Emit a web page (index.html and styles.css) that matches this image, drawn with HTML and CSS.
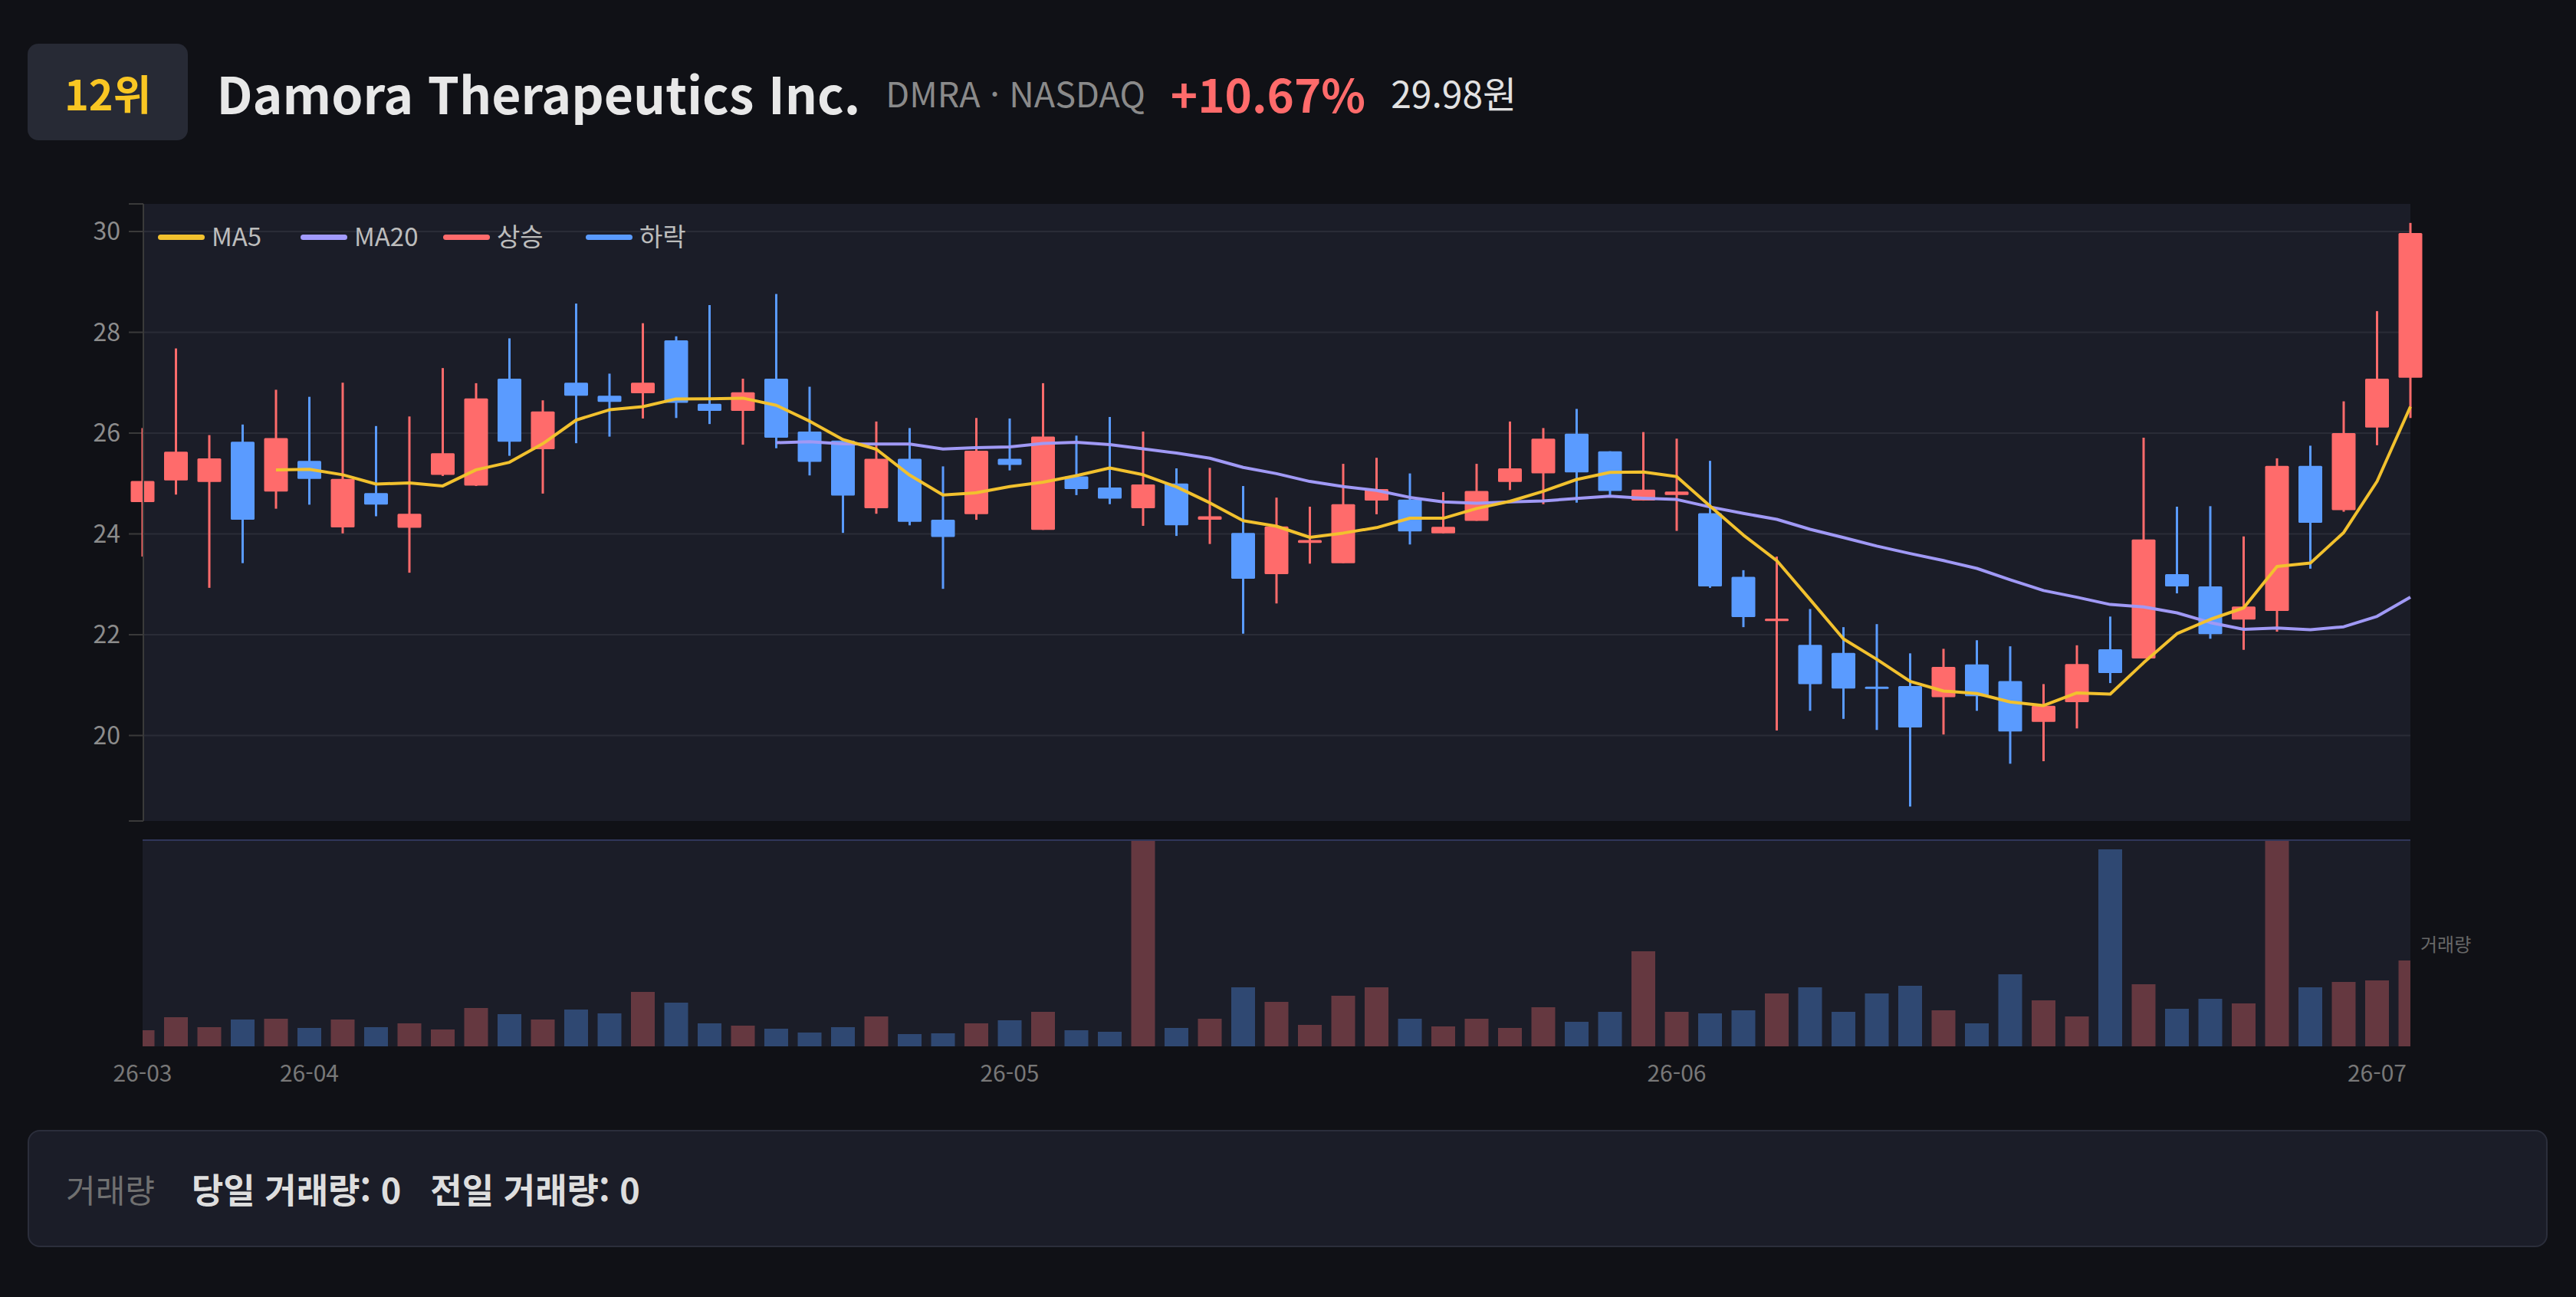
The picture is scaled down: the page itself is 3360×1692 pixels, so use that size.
FILE: index.html
```html
<!DOCTYPE html>
<html lang="ko">
<head>
<meta charset="utf-8">
<title>Damora Therapeutics Inc. 차트</title>
<link rel="stylesheet" href="styles.css">
</head>
<body>
<div class="app">
  <header class="header">
    <div class="rank">12위</div>
    <h1 class="name">Damora Therapeutics Inc.</h1>
    <span class="ticker">DMRA · NASDAQ</span>
    <span class="change">+10.67%</span>
    <span class="price">29.98원</span>
  </header>
  <section class="chart-wrap">
    <svg id="chart" class="chart" width="3287" height="1180" viewBox="0 0 3287 1180"></svg>
  </section>
  <section class="volume-box">
    <span class="vol-label">거래량</span>
    <span class="vol-value">당일 거래량: 0</span>
    <span class="vol-value">전일 거래량: 0</span>
  </section>
</div>
<script src="script.js"></script>
</body>
</html>
```

FILE: styles.css
```css
* { box-sizing: border-box; }
html, body { margin: 0; background: #101116; }
body {
  font-family: "Noto Sans CJK KR", "Noto Sans", sans-serif;
  color: #e6e6e6;
  width: 3360px;
  height: 1692px;
  overflow: hidden;
}
.app { padding: 57px 37px 0 36px; }
.header { display: flex; align-items: center; gap: 33px; height: 126px; }
.rank {
  height: 126px;
  padding: 0 48px;
  display: flex;
  align-items: center;
  background: #272a35;
  border-radius: 14px;
  color: #f9c623;
  font-size: 54px;
  font-weight: 700;
}
.name { margin: 0 0 0 4px; font-size: 66px; font-weight: 700; color: #e8e8e8; }
.ticker { font-size: 45px; color: #8a8a8a; }
.change { font-size: 60px; font-weight: 700; color: #ff6b6b; }
.price { font-size: 48px; color: #e2e2e2; }
.chart-wrap { margin-top: 67px; height: 1180px; }
.chart { display: block; }
.chart text { font-family: "Noto Sans CJK KR", "Noto Sans", sans-serif; }
.chart .plot-bg { fill: #1b1d28; }
.chart .grid { stroke: #2a2c37; stroke-width: 2; }
.chart .axis { stroke: #3a3a3a; stroke-width: 2; }
.chart .ylab { font-size: 32px; fill: #8c8c8c; }
.chart .xlab { font-size: 30px; fill: #787878; }
.chart .vlab { font-size: 24px; fill: #686868; }
.chart .leg { font-size: 33px; fill: #bdbdbd; }
.chart .up { fill: #ff6b6b; }
.chart .down { fill: #5a9bff; }
.chart .wick-up { stroke: #ff6b6b; stroke-width: 3; }
.chart .wick-down { stroke: #5a9bff; stroke-width: 3; }
.chart .vol-up { fill: #653840; }
.chart .vol-down { fill: #2f4872; }
.chart .vol-border { stroke: #30365a; stroke-width: 2; }
.chart .ma5 { fill: none; stroke: #f2c12e; stroke-width: 4; stroke-linejoin: round; }
.chart .ma20 { fill: none; stroke: #a099f5; stroke-width: 4; stroke-linejoin: round; }
.chart .sw-ma5 { fill: #f2c12e; }
.chart .sw-ma20 { fill: #a29bfe; }
.chart .sw-up { fill: #ff6b6b; }
.chart .sw-down { fill: #5a9bff; }
.volume-box {
  margin-top: 44px;
  height: 153px;
  border: 2px solid #2b2e3b;
  border-radius: 16px;
  background: #1b1d28;
  display: flex;
  align-items: center;
  gap: 38px;
  padding-left: 48px;
}
.vol-label { font-size: 42px; color: #707070; margin-right: 10px; }
.vol-value { font-size: 45px; font-weight: 700; color: #dedede; }
```

FILE: script.js
```js
(function () {
  var NS = 'http://www.w3.org/2000/svg';
  var svg = document.getElementById('chart');
  function el(tag, attrs, parent) {
    var e = document.createElementNS(NS, tag);
    for (var k in attrs) e.setAttribute(k, attrs[k]);
    (parent || svg).appendChild(e);
    return e;
  }
  // O, H, L, C, V
  var d = [
    [24.63,26.10,23.55,25.05,21],[25.06,27.68,24.78,25.63,38],[25.03,25.96,22.93,25.50,25],
    [25.83,26.17,23.42,24.28,35],[24.84,26.86,24.50,25.90,36],[25.45,26.72,24.58,25.09,24],
    [24.13,27.00,24.01,25.09,35],[24.81,26.14,24.35,24.58,25],[24.12,26.33,23.23,24.40,30],
    [25.17,27.29,25.15,25.60,22],[24.96,26.99,24.95,26.69,50],[27.08,27.88,25.55,25.83,42],
    [25.68,26.65,24.80,26.43,35],[27.00,28.57,25.80,26.74,48],[26.74,27.18,25.93,26.62,43],
    [26.79,28.18,26.29,27.00,71],[27.84,27.92,26.30,26.60,57],[26.58,28.54,26.18,26.44,30],
    [26.44,27.08,25.77,26.81,27],[27.08,28.76,25.70,25.91,23],[26.03,26.92,25.16,25.43,18],
    [25.85,25.85,24.02,24.76,25],[24.51,26.23,24.40,25.49,39],[25.49,26.10,24.17,24.24,16],
    [24.28,25.34,22.91,23.94,17],[24.39,26.30,24.28,25.65,30],[25.49,26.29,25.26,25.37,34],
    [24.08,26.99,24.08,25.93,45],[25.14,25.95,24.77,24.89,21],[24.92,26.32,24.59,24.70,19],
    [24.51,26.03,24.16,24.98,270],[25.00,25.30,23.96,24.17,24],[24.28,25.31,23.80,24.35,36],
    [24.02,24.95,22.02,23.11,77],[23.20,24.72,22.62,24.15,58],[23.82,24.54,23.41,23.88,28],
    [23.42,25.39,23.42,24.59,66],[24.66,25.51,24.39,24.89,77],[24.68,25.20,23.79,24.05,36],
    [24.01,24.83,24.01,24.14,26],[24.26,25.39,24.26,24.85,36],[25.03,26.23,24.87,25.30,24],
    [25.20,26.10,24.59,25.89,51],[25.99,26.48,24.62,25.22,32],[25.64,25.64,24.75,24.85,45],
    [24.66,26.02,24.66,24.88,124],[24.77,25.89,24.06,24.84,45],[24.41,25.45,22.93,22.96,43],
    [23.15,23.28,22.15,22.35,47],[22.27,23.55,20.10,22.32,69],[21.80,22.51,20.49,21.02,77],
    [21.64,22.15,20.33,20.93,45],[20.97,22.21,20.11,20.94,69],[20.98,21.63,18.59,20.16,79],
    [20.76,21.72,20.02,21.36,47],[21.41,21.89,20.49,20.78,30],[21.08,21.77,19.44,20.08,94],
    [20.27,21.02,19.49,20.59,60],[20.66,21.79,20.14,21.42,39],[21.71,22.36,21.04,21.24,257],
    [21.53,25.91,21.53,23.89,81],[23.20,24.54,22.82,22.96,49],[22.96,24.55,21.92,22.01,62],
    [22.30,23.95,21.70,22.56,56],[22.47,25.50,22.06,25.35,270],[25.35,25.75,23.31,24.22,77],
    [24.47,26.63,24.44,26.00,84],[26.11,28.42,25.76,27.08,86],[27.10,30.17,26.30,29.97,112]
  ];
  var L = 150, R = 3108, T = 16, B = 821;
  var VT = 845, VB = 1115;
  var STEP = 43.5, BW = 31;
  function x(i) { return L + STEP * i; }
  function y(v) { return 709.5 - (v - 20) * 65.75; }

  // price plot background + grid
  el('rect', { 'class': 'plot-bg', x: L + 1, y: T, width: R - L - 1, height: B - T });
  [30, 28, 26, 24, 22, 20].forEach(function (v) {
    var yy = y(v);
    el('line', { 'class': 'grid', x1: L, x2: R, y1: yy, y2: yy });
    el('line', { 'class': 'axis', x1: L - 18, x2: L, y1: yy, y2: yy });
    var t = el('text', { 'class': 'ylab', x: L - 29, y: yy + 11, 'text-anchor': 'end' });
    t.textContent = String(v);
  });
  el('line', { 'class': 'axis', x1: L - 18, x2: L + 1, y1: T, y2: T });
  el('line', { 'class': 'axis', x1: L - 18, x2: L + 1, y1: B, y2: B });

  // volume pane
  var defs = el('defs', {});
  var cp = el('clipPath', { id: 'volclip' }, defs);
  el('rect', { x: L, y: VT, width: R - L, height: VB - VT }, cp);
  el('rect', { 'class': 'plot-bg', x: L, y: VT, width: R - L, height: VB - VT });
  var vg = el('g', { 'clip-path': 'url(#volclip)' });
  d.forEach(function (r, i) {
    var up = r[3] >= r[0];
    var h = Math.min(r[4], 270);
    el('rect', { 'class': up ? 'vol-up' : 'vol-down', x: x(i) - BW / 2, y: VB - h, width: BW, height: h }, vg);
  });
  el('line', { 'class': 'vol-border', x1: L, x2: R, y1: VT + 1, y2: VT + 1 });

  // candles
  d.forEach(function (r, i) {
    var up = r[3] >= r[0];
    var cx = x(i);
    el('line', { 'class': up ? 'wick-up' : 'wick-down', x1: cx, x2: cx, y1: y(r[1]), y2: y(r[2]) });
    var top = y(Math.max(r[0], r[3])), bot = y(Math.min(r[0], r[3]));
    var h = Math.max(bot - top, 3);
    el('rect', { 'class': up ? 'up' : 'down', x: cx - BW / 2, y: top, width: BW, height: h, rx: 1.5 });
  });

  // moving averages
  function ma(n) {
    var pts = [];
    for (var i = n - 1; i < d.length; i++) {
      var s = 0;
      for (var j = i - n + 1; j <= i; j++) s += d[j][3];
      pts.push(x(i).toFixed(1) + ',' + y(s / n).toFixed(1));
    }
    return pts.join(' ');
  }
  el('polyline', { 'class': 'ma20', points: ma(20) });
  el('polyline', { 'class': 'ma5', points: ma(5) });

  // y axis line
  el('line', { 'class': 'axis', x1: L + 1, x2: L + 1, y1: T, y2: B });

  // legend
  var leg = [['sw-ma5', 'MA5'], ['sw-ma20', 'MA20'], ['sw-up', '상승'], ['sw-down', '하락']];
  leg.forEach(function (it, k) {
    var lx = 170 + 186 * k;
    el('rect', { 'class': it[0], x: lx, y: 56, width: 61, height: 7, rx: 3.5 });
    var t = el('text', { 'class': 'leg', x: lx + 70, y: 71 });
    t.textContent = it[1];
  });

  // x labels
  [[0, '26-03'], [5, '26-04'], [26, '26-05'], [46, '26-06'], [67, '26-07']].forEach(function (p) {
    var t = el('text', { 'class': 'xlab', x: x(p[0]), y: 1161, 'text-anchor': 'middle' });
    t.textContent = p[1];
  });

  // volume axis name
  var vl = el('text', { 'class': 'vlab', x: 3121, y: 991 });
  vl.textContent = '거래량';
})();
```
